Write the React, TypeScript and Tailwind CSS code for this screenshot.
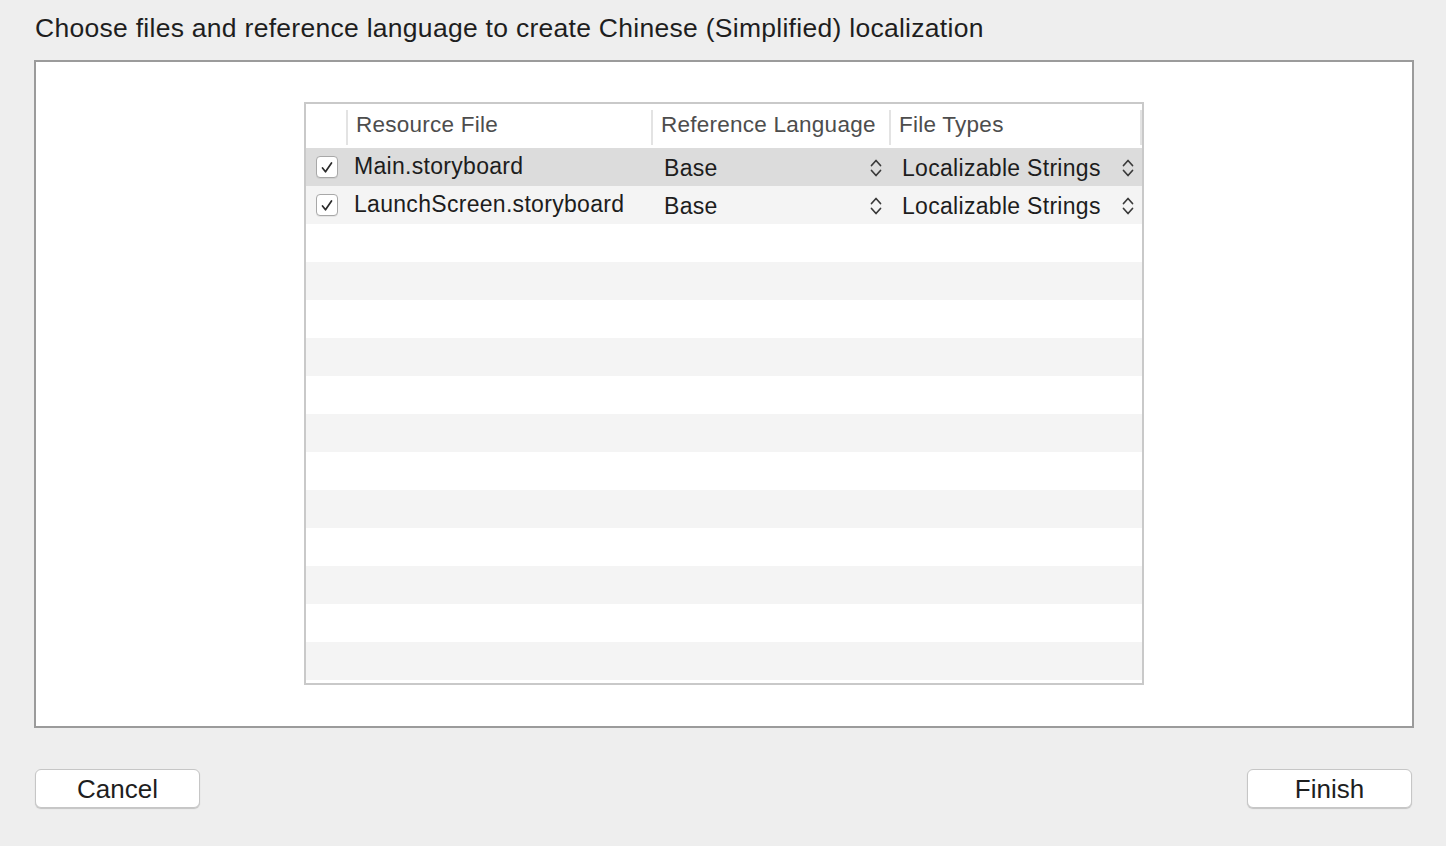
import React from "react";

type Row = { name: string; lang: string; type: string; selected?: boolean };

const rows: Row[] = [
  { name: "Main.storyboard", lang: "Base", type: "Localizable Strings", selected: true },
  { name: "LaunchScreen.storyboard", lang: "Base", type: "Localizable Strings" },
];

const font = { fontFamily: '"Liberation Sans", Arial, sans-serif' };

function UpDown() {
  return (
    <svg width="14" height="22" viewBox="0 0 14 22" fill="none" className="shrink-0">
      <path d="M2.5 8.5L7 3.5l4.5 5" stroke="#3a3a3a" strokeWidth="1.7" strokeLinecap="round" strokeLinejoin="round" />
      <path d="M2.5 13.5L7 18.5l4.5-5" stroke="#3a3a3a" strokeWidth="1.7" strokeLinecap="round" strokeLinejoin="round" />
    </svg>
  );
}

function Check() {
  return (
    <div className="flex h-[22px] w-[22px] items-center justify-center rounded-[4px] border border-[#a8a8a8] bg-white shadow-[0_1px_0_rgba(0,0,0,0.06)]">
      <svg width="14" height="13" viewBox="0 0 14 13" fill="none">
        <path d="M2.5 7l3 3.8L11.5 2" stroke="#2a2a2a" strokeWidth="1.7" strokeLinecap="round" strokeLinejoin="round" />
      </svg>
    </div>
  );
}

function HeaderCell({ label, width }: { label: string; width: string }) {
  return (
    <div className={`flex h-full items-center ${width}`}>
      <div className="h-[35px] w-[2px] bg-[#e3e3e3]" />
      <span className="pl-[8px] text-[22.5px] tracking-[0.25px] text-[#4d4d4d] -translate-y-[2px]">{label}</span>
    </div>
  );
}

export default function App() {
  return (
    <div className="flex h-[846px] w-[1446px] flex-col bg-[#eeeeee]" style={font}>
      <h1 className="pl-[35px] pt-[11px] text-[26.5px] leading-[34px] tracking-[0.28px] text-[#1e1e1e]">
        Choose files and reference language to create Chinese (Simplified) localization
      </h1>

      <div className="ml-[34px] mt-[15px] h-[668px] w-[1380px] border-2 border-[#9b9b9b] bg-white pl-[268px] pt-[40px]">
        <div className="flex h-[583px] w-[840px] flex-col border-2 border-[#c9c9c9]">
          <div className="flex h-[44px] items-center pt-[2px]">
            <div className="w-[40px]" />
            <HeaderCell label="Resource File" width="w-[305px]" />
            <HeaderCell label="Reference Language" width="w-[238px]" />
            <HeaderCell label="File Types" width="w-[251px]" />
            <div className="h-[35px] w-[2px] bg-[#e3e3e3]" />
          </div>

          {Array.from({ length: 14 }).map((_, i) => {
            const r = rows[i];
            const bg = r?.selected ? "bg-[#dcdcdc]" : i % 2 === 1 ? "bg-[#f4f4f4]" : "bg-white";
            return (
              <div key={i} className={`flex h-[38px] items-center ${bg}`}>
                {r && (
                  <>
                    <div className="flex w-[40px] justify-center pl-[2px]">
                      <Check />
                    </div>
                    <span className="w-[307px] pl-[8px] text-[23px] leading-none tracking-[0.3px] text-[#1d1d1d] -translate-y-[1px]">
                      {r.name}
                    </span>
                    <div className="flex w-[243px] items-center justify-between pl-[11px] pr-[13px] translate-y-[1px]">
                      <span className="text-[23px] leading-none tracking-[0.3px] text-[#1d1d1d]">{r.lang}</span>
                      <UpDown />
                    </div>
                    <div className="flex w-[246px] items-center justify-between pl-[6px] pr-[7px] translate-y-[1px]">
                      <span className="text-[23px] leading-none tracking-[0.3px] text-[#1d1d1d]">{r.type}</span>
                      <UpDown />
                    </div>
                  </>
                )}
              </div>
            );
          })}
        </div>
      </div>

      <div className="mt-[41px] flex justify-between pl-[35px] pr-[34px]">
        <button className="h-[39px] w-[165px] rounded-[6px] border border-[#c6c6c6] bg-white text-[26px] leading-none text-[#1e1e1e] shadow-[0_1px_1px_rgba(0,0,0,0.18)]">
          Cancel
        </button>
        <button className="h-[39px] w-[165px] rounded-[6px] border border-[#c6c6c6] bg-white text-[26px] leading-none text-[#1e1e1e] shadow-[0_1px_1px_rgba(0,0,0,0.18)]">
          Finish
        </button>
      </div>
    </div>
  );
}
